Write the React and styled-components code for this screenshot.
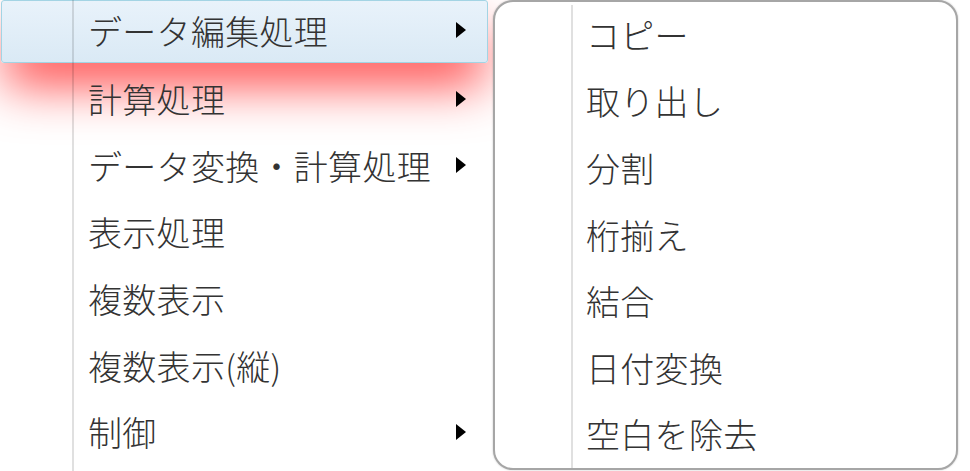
import React from "react";
import styled, { createGlobalStyle } from "styled-components";

const Global = createGlobalStyle`
  html, body { margin: 0; padding: 0; background: #ffffff; overflow: hidden; }
  body { font-family: "Noto Sans CJK JP", "Noto Sans", sans-serif; }
`;

const Stage = styled.div`
  display: flex;
  align-items: flex-start;
  width: 970px;
  height: 471px;
`;

const MainMenu = styled.div`
  position: relative;
  flex: none;
  width: 493px;
  height: 471px;
  background: #ffffff;
  display: flex;
  flex-direction: column;
  &::after {
    content: "";
    position: absolute;
    left: 72px;
    top: 0;
    bottom: 0;
    width: 2px;
    background: rgba(0, 0, 0, 0.12);
    pointer-events: none;
  }
`;

const Item = styled.div`
  box-sizing: border-box;
  display: flex;
  align-items: center;
  height: ${(p) => (p.$active ? "63px" : "66.7px")};
  margin: ${(p) => (p.$active ? "0 5px 3.7px 1px" : "0")};
  padding: ${(p) => (p.$active ? "0 21px 3px 86px" : "0 27px 3px 88px")};
  font-size: 34px;
  font-weight: 300;
  letter-spacing: 0.3px;
  color: #333333;
  white-space: nowrap;
  border-radius: 3px;
  border: ${(p) => (p.$active ? "1px solid #a3d4e4" : "none")};
  background: ${(p) =>
    p.$active
      ? "linear-gradient(to bottom, rgba(230,241,250,0.9), rgba(214,231,244,0.9))"
      : "transparent"};
  box-shadow: ${(p) =>
    p.$active ? "0 26px 50px -4px rgba(255, 0, 0, 0.72)" : "none"};
`;

const Label = styled.span`
  flex: 1;
`;

const Arrow = styled.svg`
  flex: none;
  width: 10px;
  height: 16px;
`;

const SubMenu = styled.div`
  position: relative;
  z-index: 2;
  flex: none;
  box-sizing: border-box;
  width: 465px;
  height: 470px;
  background: #ffffff;
  border: 2px solid #a6a6a6;
  border-radius: 20px;
  box-shadow: 0 0 2px rgba(0, 0, 0, 0.25);
  display: flex;
`;

const Gutter = styled.div`
  flex: none;
  width: 76px;
  margin-top: 3px;
  border-right: 2px solid #e0e0e0;
`;

const SubList = styled.div`
  display: flex;
  flex-direction: column;
  padding-left: 13px;
`;

const SubItem = styled.div`
  display: flex;
  align-items: center;
  height: 66.7px;
  padding-bottom: 2px;
  box-sizing: border-box;
  font-size: 34px;
  font-weight: 300;
  letter-spacing: 0.3px;
  color: #333333;
  white-space: nowrap;
`;

const TriangleIcon = () => (
  <Arrow viewBox="0 0 10 16">
    <polygon points="0,0 10,8 0,16" fill="#000" />
  </Arrow>
);

const mainItems = [
  { label: "データ編集処理", sub: true, active: true },
  { label: "計算処理", sub: true },
  { label: "データ変換・計算処理", sub: true },
  { label: "表示処理" },
  { label: "複数表示" },
  { label: "複数表示(縦)" },
  { label: "制御", sub: true },
];

const subItems = [
  "コピー",
  "取り出し",
  "分割",
  "桁揃え",
  "結合",
  "日付変換",
  "空白を除去",
];

export default function App() {
  return (
    <>
      <Global />
      <Stage>
        <MainMenu>
          {mainItems.map((it) => (
            <Item key={it.label} $active={it.active}>
              <Label>{it.label}</Label>
              {it.sub && <TriangleIcon />}
            </Item>
          ))}
        </MainMenu>
        <SubMenu>
          <Gutter />
          <SubList>
            {subItems.map((s) => (
              <SubItem key={s}>{s}</SubItem>
            ))}
          </SubList>
        </SubMenu>
      </Stage>
    </>
  );
}
